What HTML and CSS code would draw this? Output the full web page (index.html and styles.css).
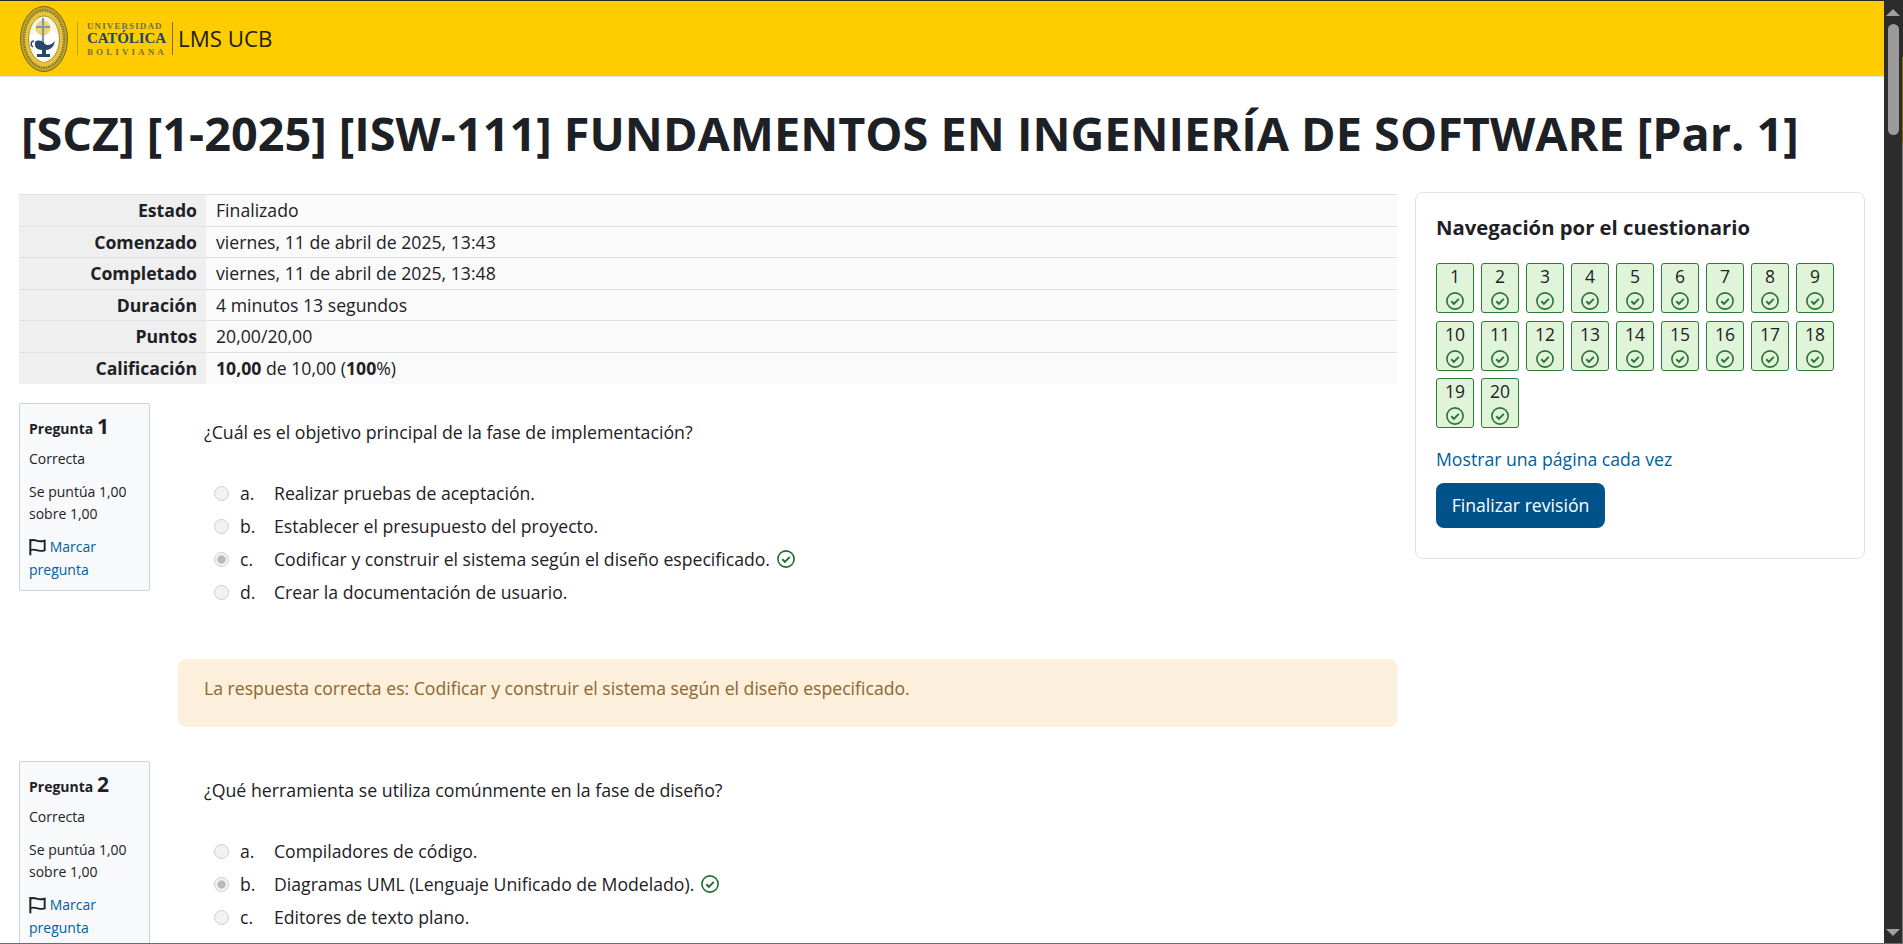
FILE: index.html
```html
<!DOCTYPE html>
<html lang="es">
<head>
<meta charset="utf-8">
<title>LMS UCB</title>
<link rel="stylesheet" href="styles.css">
</head>
<body>
<svg class="defs" width="0" height="0" aria-hidden="true">
  <symbol id="ok" viewBox="0 0 18 18">
    <circle cx="9" cy="9" r="8.1" fill="none" stroke="currentColor" stroke-width="1.6"/>
    <path d="M5.3 9.300l2.600 2.500 4.900-4.900" fill="none" stroke="currentColor" stroke-width="1.900"/>
  </symbol>
  <symbol id="flag" viewBox="0 0 18 18">
    <path d="M1.400 .5V17.800" fill="none" stroke="currentColor" stroke-width="2.100"/>
    <path d="M1.400 2.300C3.700 1.300 5.600 1.400 8 2.300s4.600 1 8.600.1V12.500c-4 1-6 .8-8.600-.1s-4.300-1-6.600 0" fill="none" stroke="currentColor" stroke-width="2"/>
  </symbol>
</svg>
<div class="frame">
  <div class="page">
    <header class="topbar">
      <svg class="emblem" viewBox="0 0 48 66" aria-hidden="true">
        <ellipse cx="24" cy="33" rx="23.500" ry="32.500" fill="#c9a21f" stroke="#6d6a2d" stroke-width="1"/>
        <ellipse cx="24" cy="33" rx="20" ry="28.500" fill="#e9c33a" stroke="#7c7a45" stroke-width="2.500" stroke-dasharray="1.500 1"/>
        <ellipse cx="24" cy="33" rx="15.500" ry="23" fill="#f7f5e6" stroke="#b18f22" stroke-width="1"/>
        <path d="M9.500 31C13 27 20 24 24 23s11 3 14.500 8C37 46 31 55 24 56 16 55 10 45 9.500 31z" fill="#fff"/>
        <circle cx="23" cy="22" r="7.500" fill="#f3d56a"/>
        <path d="M23 12V41M16 21H30" stroke="#8296ac" stroke-width="2.200" fill="none"/>
        <path d="M15 36c2-2 7-2 9 1 2 3 7 3 11-2-1 6-5 9-9 9v4h4v3H17v-3h5v-4c-5 0-8-3-7-8z" fill="#27476d"/>
        <path d="M14 35c-3 0-4 4-1 6" stroke="#27476d" stroke-width="1.500" fill="none"/>
      </svg>
      <div class="logo-rule"></div>
      <div class="logo-words">
        <span class="logo-top">UNIVERSIDAD</span>
        <span class="logo-main">CATÓLICA</span>
        <span class="logo-bottom">BOLIVIANA</span>
      </div>
      <div class="logo-rule logo-rule-dark"></div>
      <span class="sitename">LMS UCB</span>
    </header>

    <h1 class="course-title">[SCZ] [1-2025] [ISW-111] FUNDAMENTOS EN INGENIERÍA DE SOFTWARE [Par. 1]</h1>

    <div class="columns">
      <main class="main-col">
        <table class="summary">
          <tr><th>Estado</th><td>Finalizado</td></tr>
          <tr><th>Comenzado</th><td>viernes, 11 de abril de 2025, 13:43</td></tr>
          <tr><th>Completado</th><td>viernes, 11 de abril de 2025, 13:48</td></tr>
          <tr><th>Duración</th><td>4 minutos 13 segundos</td></tr>
          <tr><th>Puntos</th><td>20,00/20,00</td></tr>
          <tr><th>Calificación</th><td><b>10,00</b> de 10,00 (<b>100</b>%)</td></tr>
        </table>

        <section class="question">
          <div class="qinfo">
            <h3 class="qno">Pregunta <span>1</span></h3>
            <p class="qstate">Correcta</p>
            <p class="qgrade">Se puntúa 1,00 sobre 1,00</p>
            <p class="qflag"><svg class="flag-icon"><use href="#flag"/></svg> <a href="#">Marcar pregunta</a></p>
          </div>
          <div class="qcontent">
            <div class="formulation">
              <p class="qtext">¿Cuál es el objetivo principal de la fase de implementación?</p>
              <div class="answer">
                <label class="opt"><input type="radio" disabled><span class="letter">a.</span><span>Realizar pruebas de aceptación.</span></label>
                <label class="opt"><input type="radio" disabled><span class="letter">b.</span><span>Establecer el presupuesto del proyecto.</span></label>
                <label class="opt"><input type="radio" disabled checked><span class="letter">c.</span><span>Codificar y construir el sistema según el diseño especificado.</span><svg class="ok-icon"><use href="#ok"/></svg></label>
                <label class="opt"><input type="radio" disabled><span class="letter">d.</span><span>Crear la documentación de usuario.</span></label>
              </div>
            </div>
            <div class="feedback">La respuesta correcta es: Codificar y construir el sistema según el diseño especificado.</div>
          </div>
        </section>

        <section class="question">
          <div class="qinfo">
            <h3 class="qno">Pregunta <span>2</span></h3>
            <p class="qstate">Correcta</p>
            <p class="qgrade">Se puntúa 1,00 sobre 1,00</p>
            <p class="qflag"><svg class="flag-icon"><use href="#flag"/></svg> <a href="#">Marcar pregunta</a></p>
          </div>
          <div class="qcontent">
            <div class="formulation">
              <p class="qtext">¿Qué herramienta se utiliza comúnmente en la fase de diseño?</p>
              <div class="answer">
                <label class="opt"><input type="radio" disabled><span class="letter">a.</span><span>Compiladores de código.</span></label>
                <label class="opt"><input type="radio" disabled checked><span class="letter">b.</span><span>Diagramas UML (Lenguaje Unificado de Modelado).</span><svg class="ok-icon"><use href="#ok"/></svg></label>
                <label class="opt"><input type="radio" disabled><span class="letter">c.</span><span>Editores de texto plano.</span></label>
              </div>
            </div>
          </div>
        </section>
      </main>

      <aside class="side-card">
        <h5 class="side-title">Navegación por el cuestionario</h5>
        <div class="nav-grid">
          <a class="nav-btn" href="#">1<svg><use href="#ok"/></svg></a>
          <a class="nav-btn" href="#">2<svg><use href="#ok"/></svg></a>
          <a class="nav-btn" href="#">3<svg><use href="#ok"/></svg></a>
          <a class="nav-btn" href="#">4<svg><use href="#ok"/></svg></a>
          <a class="nav-btn" href="#">5<svg><use href="#ok"/></svg></a>
          <a class="nav-btn" href="#">6<svg><use href="#ok"/></svg></a>
          <a class="nav-btn" href="#">7<svg><use href="#ok"/></svg></a>
          <a class="nav-btn" href="#">8<svg><use href="#ok"/></svg></a>
          <a class="nav-btn" href="#">9<svg><use href="#ok"/></svg></a>
          <a class="nav-btn" href="#">10<svg><use href="#ok"/></svg></a>
          <a class="nav-btn" href="#">11<svg><use href="#ok"/></svg></a>
          <a class="nav-btn" href="#">12<svg><use href="#ok"/></svg></a>
          <a class="nav-btn" href="#">13<svg><use href="#ok"/></svg></a>
          <a class="nav-btn" href="#">14<svg><use href="#ok"/></svg></a>
          <a class="nav-btn" href="#">15<svg><use href="#ok"/></svg></a>
          <a class="nav-btn" href="#">16<svg><use href="#ok"/></svg></a>
          <a class="nav-btn" href="#">17<svg><use href="#ok"/></svg></a>
          <a class="nav-btn" href="#">18<svg><use href="#ok"/></svg></a>
          <a class="nav-btn" href="#">19<svg><use href="#ok"/></svg></a>
          <a class="nav-btn" href="#">20<svg><use href="#ok"/></svg></a>
        </div>
        <a class="side-link" href="#">Mostrar una página cada vez</a>
        <a class="finish-btn" href="#">Finalizar revisión</a>
      </aside>
    </div>
  </div>
  <div class="scrollbar">
    <span class="arrow-up"></span>
    <span class="thumb"></span>
    <span class="arrow-down"></span>
  </div>
  <div class="edge"></div>
</div>
</body>
</html>
```
FILE: styles.css
```css
* { box-sizing: border-box; }
html, body { margin: 0; height: 100%; overflow: hidden; }
body {
  font-family: "Open Sans", "Noto Sans", sans-serif;
  font-size: 17.650px;
  color: #1d2125;
  background: #fff;
}
.defs { display: block; height: 0; }
a { color: #00609a; text-decoration: none; }

.frame { display: flex; height: 944px; width: 1903px; border-bottom: 1px solid #6b6b6b; }
.page { flex: 1; min-width: 0; overflow: hidden; }

.topbar {
  display: flex;
  align-items: center;
  height: 77px;
  background: #ffcc00;
  border-top: 1px solid #26282c;
  border-bottom: 1px solid #e3e3dc;
  padding-left: 20px;
}
.emblem { width: 48px; height: 66px; margin-right: 9px; flex: none; }
.logo-rule { width: 1px; height: 33px; background: #b3a13a; flex: none; }
.logo-rule-dark { background: #7a6c1c; margin-left: 9px; margin-right: 5px; }
.logo-words {
  display: flex;
  flex-direction: column;
  margin-left: 9px;
  width: 76px;
  font-family: "Liberation Serif", serif;
  font-weight: 700;
  white-space: nowrap;
}
.logo-top { font-size: 9px; line-height: 10px; letter-spacing: 1.100px; color: #6f6f4c; }
.logo-main { font-size: 15px; line-height: 15px; color: #1e466b; letter-spacing: -.100px; }
.logo-bottom { font-size: 9px; line-height: 10px; letter-spacing: 3.100px; color: #6f6f4c; margin-top: 1px; }
.sitename { font-size: 22.300px; color: #1d1d10; }

.course-title {
  margin: 28px 0 33px 21px;
  font-size: 46.800px;
  line-height: 56px;
  font-weight: 700;
  white-space: nowrap;
}

.columns { display: flex; align-items: flex-start; padding-left: 19px; gap: 18px; }
.main-col { width: 1378px; flex: none; }

.summary { width: 100%; border-collapse: collapse; margin-bottom: 19px; background: #fafafa; }
.summary tr { border-top: 1px solid #dfe0e6; }
.summary th, .summary td { padding: 0 10px; height: 31.500px; line-height: 20px; }
.summary th { width: 187px; text-align: right; background: #efefef; font-weight: 700; padding-right: 9px; }
.summary td { text-align: left; font-weight: 400; }

.question { display: flex; margin-bottom: 34px; align-items: flex-start; }
.qinfo {
  width: 131px;
  height: 188px;
  flex: none;
  margin-right: 28px;
  background: #f8f9fa;
  border: 1px solid #cdd2d8;
  border-radius: 2px;
  padding: 10px 9px;
  font-size: 14px;
  line-height: 22px;
}
.qno { margin: 0 0 7px; font-size: 14px; line-height: 24px; font-weight: 700; }
.qno span { font-size: 21px; font-weight: 700; }
.qinfo p { margin: 0 0 11px; }
.qinfo .qgrade { margin-bottom: 10px; }
.qinfo .qflag { line-height: 23px; }
.flag-icon { width: 17px; height: 18px; vertical-align: -4px; color: #1d2125; }

.qcontent { flex: 1; min-width: 0; }
.formulation { padding: 18px 0 0 26px; }
.qtext { margin: 0 0 34px; line-height: 22px; font-size: 17.750px; }
.answer { display: flex; flex-direction: column; }
.opt { display: flex; align-items: center; height: 33px; padding-left: 10px; }
.opt input {
  appearance: none;
  width: 15px;
  height: 15px;
  margin: 0 11px 0 0;
  flex: none;
  border: 1px solid #cfcfcf;
  border-radius: 50%;
  background: #f2f2f2;
}
.opt input:checked { background: radial-gradient(circle, #b9b9b9 0 3.800px, #f2f2f2 4.500px); }
.letter { width: 34px; flex: none; }
.ok-icon { width: 18px; height: 18px; margin-left: 7px; color: #1f6e2e; flex: none; }

.feedback {
  margin-top: 50px;
  height: 68px;
  background: #fcefdc;
  border-radius: 8px;
  color: #8e662e;
  padding: 18px 26px;
  line-height: 22px;
}

.side-card {
  width: 450px;
  height: 367px;
  flex: none;
  margin-top: -2px;
  border: 1px solid #dee2e6;
  border-radius: 8px;
  padding: 20px;
}
.side-title { margin: 0 0 22px; font-size: 20.300px; line-height: 28px; font-weight: 700; }
.nav-grid { display: flex; flex-wrap: wrap; gap: 7.500px 7px; margin-bottom: 19px; }
.nav-btn {
  display: flex;
  flex-direction: column;
  align-items: center;
  width: 38px;
  height: 50px;
  border: 1px solid #2c7a33;
  border-radius: 3px;
  background: #e0f4d9;
  color: #1d2125;
  font-size: 17.500px;
  line-height: 24px;
}
.nav-btn svg { width: 18px; height: 18px; margin-top: 4px; color: #2c7135; flex: none; }
.side-link { display: block; line-height: 24px; margin-bottom: 12px; }
.finish-btn {
  display: block;
  width: 169px;
  height: 45px;
  line-height: 45px;
  text-align: center;
  background: #00538a;
  color: #fff;
  border-radius: 8px;
}

.scrollbar {
  width: 18px;
  flex: none;
  display: flex;
  flex-direction: column;
  align-items: center;
  background: #2c2c2c;
  padding: 9px 0 7px;
}
.arrow-up { border: 7px solid transparent; border-top: 0; border-bottom: 7px solid #a0a0a0; }
.arrow-down { border: 7px solid transparent; border-bottom: 0; border-top: 7px solid #a0a0a0; margin-top: auto; }
.thumb { width: 11px; height: 111px; margin-top: 8px; background: #9b9b9b; border-radius: 6px; }
.edge { width: 1px; flex: none; background: linear-gradient(#2c2c2c 0 57px, #7a6a10 57px 142px, #777 142px); }
```
